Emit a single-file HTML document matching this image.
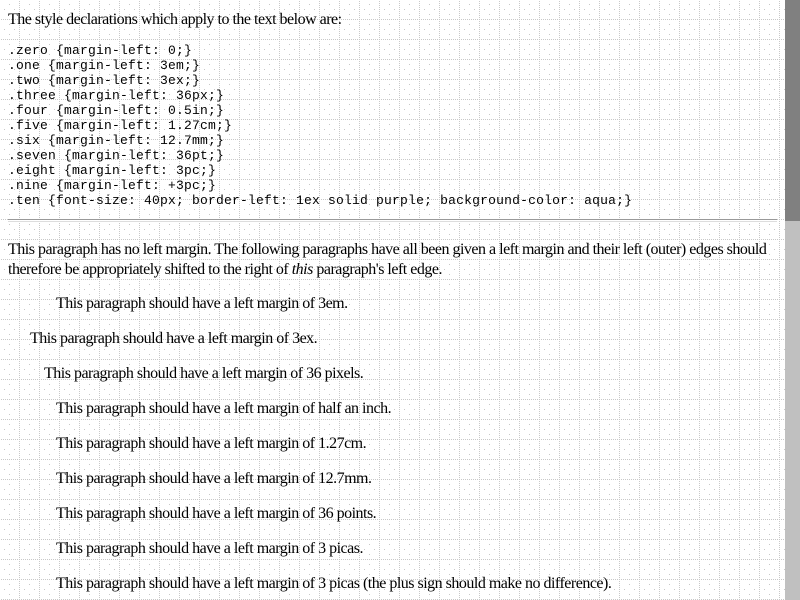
<!DOCTYPE html>
<html><head><style>
html,body{margin:0;padding:0;width:800px;height:600px;overflow:hidden;background:#fff;}
#bg{position:absolute;left:0;top:0;width:785px;height:600px;}
.t{position:absolute;font-family:"Liberation Serif",serif;font-size:16px;line-height:20px;letter-spacing:-0.5px;color:#000;white-space:nowrap;}
pre{position:absolute;left:8px;top:43px;margin:0;font-family:"Liberation Mono",monospace;font-size:13px;line-height:15px;letter-spacing:0.2px;color:#000;}
#hr{position:absolute;left:8px;top:219px;width:769px;height:1px;border-top:1px solid #999;border-bottom:1px solid #ddd;}
#sb{position:absolute;left:785px;top:0;width:15px;height:600px;background:#c0c0c0;}
#th{position:absolute;left:785px;top:0;width:15px;height:221px;background:#808080;}
</style></head><body>
<svg id="bg" width="785" height="600">
<defs><pattern id="g" x="0" y="0" width="20" height="20" patternUnits="userSpaceOnUse">
<g fill="#c8c8c8">
<rect x="19" y="1" width="1" height="1"/><rect x="19" y="3" width="1" height="1"/><rect x="19" y="5" width="1" height="1"/><rect x="19" y="7" width="1" height="1"/><rect x="19" y="9" width="1" height="1"/><rect x="19" y="11" width="1" height="1"/><rect x="19" y="13" width="1" height="1"/><rect x="19" y="15" width="1" height="1"/><rect x="19" y="17" width="1" height="1"/><rect x="19" y="19" width="1" height="1"/>
<rect x="1" y="19" width="1" height="1"/><rect x="3" y="19" width="1" height="1"/><rect x="5" y="19" width="1" height="1"/><rect x="7" y="19" width="1" height="1"/><rect x="9" y="19" width="1" height="1"/><rect x="11" y="19" width="1" height="1"/><rect x="13" y="19" width="1" height="1"/><rect x="15" y="19" width="1" height="1"/><rect x="17" y="19" width="1" height="1"/>
<rect x="9" y="4" width="1" height="1"/><rect x="4" y="9" width="1" height="1"/><rect x="14" y="9" width="1" height="1"/><rect x="9" y="14" width="1" height="1"/>
</g></pattern></defs>
<rect width="785" height="600" fill="url(#g)"/>
</svg>
<div class="t" style="left:8px;top:10px">The style declarations which apply to the text below are:</div>
<pre>.zero {margin-left: 0;}
.one {margin-left: 3em;}
.two {margin-left: 3ex;}
.three {margin-left: 36px;}
.four {margin-left: 0.5in;}
.five {margin-left: 1.27cm;}
.six {margin-left: 12.7mm;}
.seven {margin-left: 36pt;}
.eight {margin-left: 3pc;}
.nine {margin-left: +3pc;}
.ten {font-size: 40px; border-left: 1ex solid purple; background-color: aqua;}</pre>
<div id="hr"></div>
<div class="t" style="left:8px;top:240px">This paragraph has no left margin. The following paragraphs have all been given a left margin and their left (outer) edges should<br>therefore be appropriately shifted to the right of <i>this</i> paragraph's left edge.</div>
<div class="t" style="left:56px;top:294px">This paragraph should have a left margin of 3em.</div>
<div class="t" style="left:30px;top:329px">This paragraph should have a left margin of 3ex.</div>
<div class="t" style="left:44px;top:364px">This paragraph should have a left margin of 36 pixels.</div>
<div class="t" style="left:56px;top:399px">This paragraph should have a left margin of half an inch.</div>
<div class="t" style="left:56px;top:434px">This paragraph should have a left margin of 1.27cm.</div>
<div class="t" style="left:56px;top:469px">This paragraph should have a left margin of 12.7mm.</div>
<div class="t" style="left:56px;top:504px">This paragraph should have a left margin of 36 points.</div>
<div class="t" style="left:56px;top:539px">This paragraph should have a left margin of 3 picas.</div>
<div class="t" style="left:56px;top:574px">This paragraph should have a left margin of 3 picas (the plus sign should make no difference).</div>
<div id="sb"></div><div id="th"></div>
</body></html>
